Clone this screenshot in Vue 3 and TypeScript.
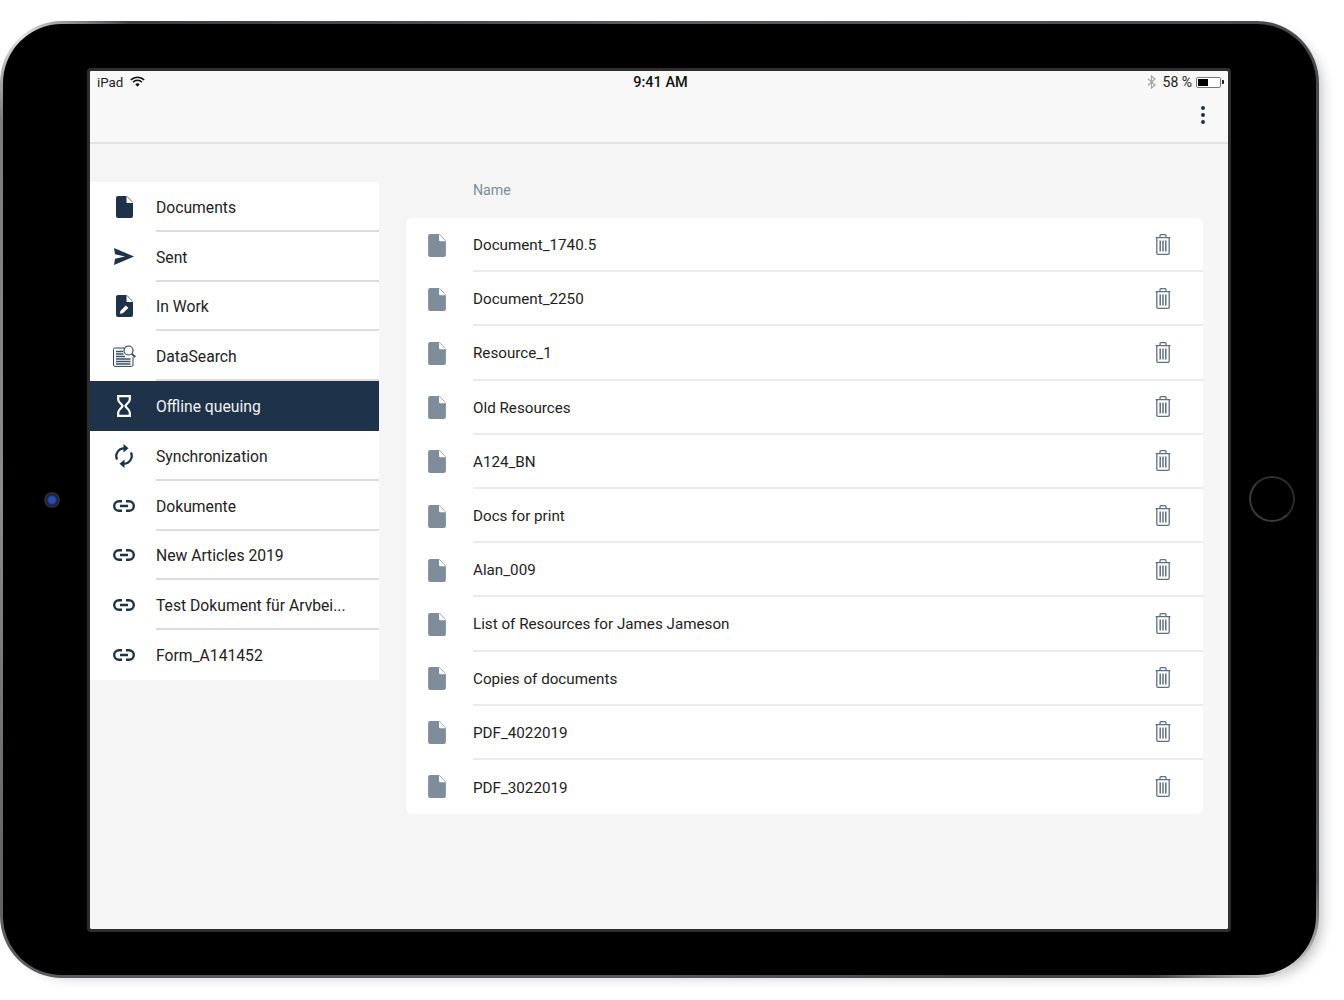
<script setup lang="ts">
interface NavItem { label: string; icon: string; active?: boolean }
const nav: NavItem[] = [
  { label: 'Documents', icon: 'file' },
  { label: 'Sent', icon: 'send' },
  { label: 'In Work', icon: 'edit' },
  { label: 'DataSearch', icon: 'search' },
  { label: 'Offline queuing', icon: 'hourglass', active: true },
  { label: 'Synchronization', icon: 'sync' },
  { label: 'Dokumente', icon: 'link' },
  { label: 'New Articles 2019', icon: 'link' },
  { label: 'Test Dokument für Arvbei...', icon: 'link' },
  { label: 'Form_A141452', icon: 'link' },
]
const files: string[] = [
  'Document_1740.5', 'Document_2250', 'Resource_1', 'Old Resources', 'A124_BN',
  'Docs for print', 'Alan_009', 'List of Resources for James Jameson',
  'Copies of documents', 'PDF_4022019', 'PDF_3022019',
]
const docPath = 'M2 0H10.5V6a1 1 0 0 0 1 1H17V20a2 2 0 0 1-2 2H2a2 2 0 0 1-2-2V2a2 2 0 0 1 2-2z'
</script>

<template>
  <div class="stage">
    <div class="device">
      <div class="camera"></div>
      <div class="home"></div>
      <div class="screen">
        <header class="top">
          <div class="status">
            <div class="st-left">
              <span>iPad</span>
              <svg class="wifi" viewBox="0 0 15 11" width="15" height="11">
                <path d="M.8 3.9a9.6 9.6 0 0 1 13.4 0" fill="none" stroke="#111" stroke-width="1.5"/>
                <path d="M3 6.2a6.4 6.4 0 0 1 9 0" fill="none" stroke="#111" stroke-width="1.5"/>
                <path d="M5.3 8.3a3.2 3.2 0 0 1 4.4 0L7.5 10.8z" fill="#111"/>
              </svg>
            </div>
            <div class="st-time">9:41 AM</div>
            <div class="st-right">
              <svg viewBox="0 0 9 14" width="9" height="14">
                <path d="M1 3.8 8 10 4.5 13V1L8 4 1 10.2" fill="none" stroke="#a4a4a4" stroke-width="1.2"/>
              </svg>
              <span class="pct">58 %</span>
              <div class="battery"><div class="charge"></div></div>
              <div class="nub"></div>
            </div>
          </div>
          <div class="toolbar">
            <div class="dots"><i></i><i></i><i></i></div>
          </div>
        </header>

        <div class="body">
          <nav class="side">
            <div v-for="item in nav" :key="item.label" class="nav-row" :class="{ active: item.active }">
              <div class="nav-icon">
                <svg v-if="item.icon === 'file'" viewBox="0 0 17 22" width="17" height="22">
                  <path :d="docPath" fill="#1e3349"/>
                  <path d="M11 .4 16.7 6.5" stroke="#1e3349" stroke-width=".7"/>
                </svg>
                <svg v-else-if="item.icon === 'send'" viewBox="0 0 20 17" width="20" height="17">
                  <path d="M0 0 20 8.5 0 17 1 10.8 11 8.5 1 6.2z" fill="#1e3349"/>
                </svg>
                <svg v-else-if="item.icon === 'edit'" viewBox="0 0 17 22" width="17" height="22">
                  <path :d="docPath" fill="#1e3349"/>
                  <path d="M11 .4 16.7 6.5" stroke="#1e3349" stroke-width=".7"/>
                  <path d="M3.8 18.8 4.4 16 9.8 10.6 12.4 13 6.8 18.3z" fill="#fff"/>
                </svg>
                <svg v-else-if="item.icon === 'search'" viewBox="0 0 23 22" width="23" height="22">
                  <path d="M11 3H1.8C1 3 .5 3.5.5 4.3V20c0 .8.5 1.4 1.3 1.4H18.7c.8 0 1.300-.6 1.300-1.400V12" fill="none" stroke="#2d4258" stroke-width="1"/>
                  <path d="M3 6.500H10M3 9H10.500M3 11.500H12M3 14H17.500M3 16.500H17.500M3 19H17.500" stroke="#3c4f63" stroke-width="1.3"/>
                  <circle cx="15.5" cy="5.5" r="4.5" fill="#fff" stroke="#2d4258" stroke-width="1.2"/>
                  <path d="M18.8 8.8 22.3 12" stroke="#2d4258" stroke-width="1.8"/>
                </svg>
                <svg v-else-if="item.icon === 'hourglass'" viewBox="0 0 14 22" width="14" height="22">
                  <path d="M1.2 1.2H12.8V4.5C12.8 7.2 9.4 8.8 8.4 11 9.4 13.2 12.8 14.8 12.8 17.5V20.8H1.2V17.5C1.2 14.8 4.6 13.2 5.6 11 4.6 8.8 1.2 7.2 1.2 4.5z" fill="none" stroke="#fff" stroke-width="2.2" stroke-linejoin="miter"/>
                </svg>
                <svg v-else-if="item.icon === 'sync'" viewBox="0 0 18 24" width="18" height="24">
                  <path d="M2.1 15.5A7.8 7.8 0 0 1 9 4.3" fill="none" stroke="#1e3349" stroke-width="2.3"/>
                  <path d="M15.9 8.5A7.8 7.8 0 0 1 9 19.7" fill="none" stroke="#1e3349" stroke-width="2.3"/>
                  <path d="M8.5 0 13.5 4.3 8.5 8.5zM9.5 24 4.5 19.7 9.5 15.5z" fill="#1e3349"/>
                </svg>
                <svg v-else viewBox="0 0 22 12" width="22" height="12">
                  <path d="M9 1.2H6a4.8 4.8 0 0 0 0 9.600H9M13 1.200h3a4.800 4.800 0 0 1 0 9.600H13M7 6H15" fill="none" stroke="#1e3349" stroke-width="2.4"/>
                </svg>
              </div>
              <div class="nav-label">{{ item.label }}</div>
            </div>
          </nav>

          <main class="content">
            <div class="col-head">Name</div>
            <div class="card">
              <div v-for="name in files" :key="name" class="file-row">
                <div class="file-icon">
                  <svg viewBox="0 0 17 22" width="18" height="23">
                    <path :d="docPath" fill="#7f8c99"/>
                    <path d="M11 .4 16.7 6.5" stroke="#7f8c99" stroke-width=".7"/>
                  </svg>
                </div>
                <div class="file-main">
                  <span class="file-name">{{ name }}</span>
                  <svg class="trash" viewBox="0 0 16 21" width="16" height="21">
                    <path d="M.6 3.6H15.4M1.8 3.6V19c0 .8.5 1.3 1.3 1.3h9.800c.8 0 1.300-.5 1.300-1.300V3.600M5 3.600V1.700c0-.6.3-1 .9-1h4.200c.6 0 .9.400.9 1v1.900" fill="none" stroke="#5f7083" stroke-width="1.3"/>
                    <path d="M5.2 6.5V17.5M8 6.5V17.5M10.8 6.5V17.5" stroke="#5f7083" stroke-width="1.5"/>
                  </svg>
                </div>
              </div>
            </div>
          </main>
        </div>
      </div>
    </div>
  </div>
</template>

<style>
html, body { margin: 0; background: #fff; }
</style>

<style scoped>
.stage {
  width: 1344px;
  height: 1000px;
  padding-top: 21px;
  box-sizing: border-box;
  overflow: hidden;
  font-family: Roboto, "Liberation Sans", sans-serif;
}
.device {
  position: relative;
  width: 1319px;
  height: 957px;
  box-sizing: border-box;
  padding: 47px 88px 46px 87px;
  border: 3px solid transparent;
  border-radius: 62px;
  background:
    linear-gradient(#000, #000) padding-box,
    conic-gradient(from 0deg at 50% 50%, #5a5c5f 0deg, #4a4c4f 50deg, #3a3c3f 88deg, #55575a 120deg, #d8d8d8 127deg, #3c3e40 134deg, #55575a 180deg, #55575a 230deg, #8a8c8e 270deg, #7a7c7e 300deg, #e4e4e4 306deg, #3c3e40 312deg, #5a5c5f 360deg) border-box;
  box-shadow: 9px 5px 14px -7px rgba(0, 0, 0, 0.28);
}
.camera {
  position: absolute;
  left: 41px;
  top: 468px;
  width: 16px;
  height: 16px;
  border-radius: 50%;
  background: radial-gradient(circle, #2a4ab8 0 28%, #1c2340 45%, #2c2d31 62%, #111 100%);
}
.home {
  position: absolute;
  left: 1246px;
  top: 452px;
  width: 46px;
  height: 46px;
  box-sizing: border-box;
  border-radius: 50%;
  border: 2px solid #3a3a3a;
  border-right-color: #2a2a2a;
  border-top-color: #2e2e2e;
}
.screen {
  width: 1138px;
  height: 858px;
  background: #f5f5f5;
  outline: 3px solid #2e2e2e;
  border-radius: 1px;
  display: flex;
  flex-direction: column;
  overflow: hidden;
}
.top {
  height: 73px;
  flex: none;
  box-sizing: border-box;
  background: #f8f8f8;
  border-bottom: 2px solid #e3e3e3;
}
.status {
  height: 22px;
  padding: 0 4px 0 7px;
  display: grid;
  grid-template-columns: 1fr auto 1fr;
  align-items: center;
  font-size: 14px;
  color: #222;
}
.st-left { display: flex; align-items: center; gap: 7px; font-size: 13.3px; }
.wifi { display: block; margin-top: -1px; }
.st-time { font-weight: 500; font-size: 14.5px; color: #111; }
.st-right { display: flex; align-items: center; justify-content: flex-end; }
.pct { margin-left: 7px; margin-right: 4px; }
.battery {
  width: 21px;
  height: 7px;
  padding: 1px;
  border: 1px solid #777;
  border-radius: 2px;
  box-sizing: content-box;
  background: #fff;
}
.charge { width: 10px; height: 7px; background: #000; }
.nub { width: 2px; height: 4px; margin-left: 1px; background: #222; border-radius: 0 1px 1px 0; }
.toolbar {
  height: 49px;
  display: flex;
  justify-content: flex-end;
  align-items: flex-start;
  padding: 13px 23px 0 0;
  box-sizing: border-box;
}
.dots { display: flex; flex-direction: column; gap: 3px; }
.dots i { width: 4px; height: 4px; border-radius: 50%; background: #1e3349; display: block; }

.body {
  flex: 1;
  display: flex;
  align-items: flex-start;
  gap: 27px;
  padding-top: 38px;
  min-height: 0;
}
.side {
  width: 289px;
  flex: none;
  background: #fff;
  display: flex;
  flex-direction: column;
}
.nav-row {
  height: 49.8px;
  flex: none;
  display: flex;
  align-items: stretch;
  font-size: 15.7px;
  color: #222;
}
.nav-icon {
  width: 66px;
  padding-left: 2px;
  box-sizing: border-box;
  flex: none;
  display: flex;
  align-items: center;
  justify-content: center;
}
.nav-label {
  flex: 1;
  display: flex;
  align-items: center;
  box-sizing: border-box;
  border-bottom: 2px solid #dcdcdc;
  padding-top: 3px;
}
.nav-row:last-child .nav-label { border-bottom-color: transparent; }
.nav-row.active { background: #1e3349; color: #f2f2f2; }
.nav-row.active .nav-label { border-bottom-color: #1e3349; }

.content { width: 797px; flex: none; }
.col-head {
  height: 36px;
  padding-left: 67px;
  box-sizing: border-box;
  font-size: 14.2px;
  line-height: 17px;
  color: #7d8b99;
}
.card {
  background: #fff;
  border-radius: 6px;
  overflow: hidden;
}
.file-row { height: 54.2px; display: flex; align-items: stretch; }
.file-icon {
  width: 67px;
  padding-right: 5px;
  box-sizing: border-box;
  flex: none;
  display: flex;
  align-items: center;
  justify-content: center;
}
.file-main {
  flex: 1;
  display: flex;
  align-items: center;
  justify-content: space-between;
  padding-right: 32px;
  box-sizing: border-box;
  border-bottom: 2px solid #ececec;
  font-size: 15.2px;
  color: #222;
}
.file-row:last-child .file-main { border-bottom: 0; }
.file-name { display: block; margin-top: 2px; }
.trash { display: block; }
</style>
